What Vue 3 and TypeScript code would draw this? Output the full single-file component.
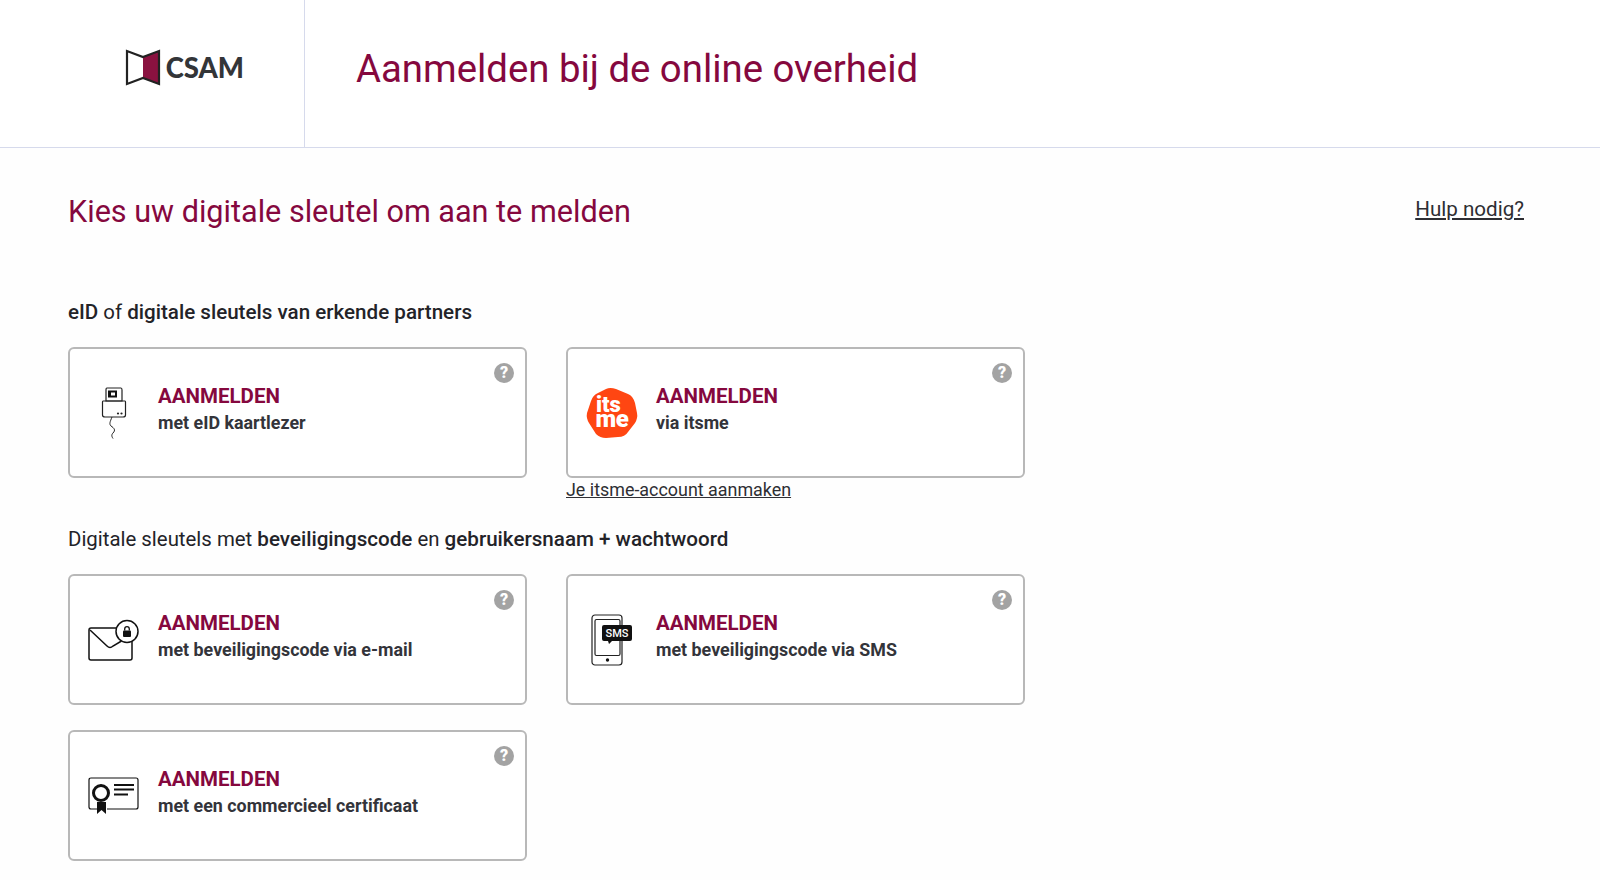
<script setup lang="ts">
interface Option {
  key: string
  sub: string
}
const first: Option[] = [
  { key: 'eid', sub: 'met eID kaartlezer' },
  { key: 'itsme', sub: 'via itsme' },
]
const second: Option[] = [
  { key: 'mail', sub: 'met beveiligingscode via e-mail' },
  { key: 'sms', sub: 'met beveiligingscode via SMS' },
  { key: 'cert', sub: 'met een commercieel certificaat' },
]
</script>

<template>
  <div class="page">
    <header class="top">
      <div class="logo-cell">
        <div class="logo">
          <svg class="door" width="36" height="37" viewBox="0 0 36 37">
            <path d="M18 8 L34 2 L34 35 L18 29 Z" fill="#8a1240" />
            <path d="M18 8 L34 2 L34 35 L18 29 L2 35 L2 2 Z" fill="none" stroke="#222" stroke-width="2.2" />
          </svg>
          <span class="logo-text">CSAM</span>
        </div>
      </div>
      <h1 class="title">Aanmelden bij de online overheid</h1>
    </header>

    <main class="content">
      <div class="head-row">
        <h2 class="heading">Kies uw digitale sleutel om aan te melden</h2>
        <a class="help">Hulp nodig?</a>
      </div>

      <p class="label first-label"><b>eID</b> of <b>digitale sleutels van erkende partners</b></p>
      <div class="grid">
        <div v-for="o in first" :key="o.key" class="card">
          <div class="icon">
            <svg v-if="o.key === 'eid'" width="26" height="52" viewBox="0 0 26 52" fill="none" stroke="#222">
              <path d="M6 1 H20 Q21 1 21 3 V14 H5 V3 Q5 1 6 1 Z" stroke-width="1.2" />
              <rect x="7" y="3.500" width="9" height="7" fill="#111" stroke="none" />
              <rect x="10" y="5.500" width="4" height="3" fill="#fff" stroke="none" />
              <path d="M2 14 H24 Q24.5 14 24.5 15 V28 Q24.5 30 22 30 H4 Q1.5 30 1.5 28 V15 Q1.5 14 2 14 Z" stroke-width="1.2" />
              <circle cx="17" cy="26.500" r="1.100" fill="#222" stroke="none" />
              <circle cx="20.500" cy="26.500" r="1.100" fill="#222" stroke="none" />
              <path d="M11 30 C9 35 8 37 10 39 C13 41 15 43 12 46 C10 48 11 50 12 51.500" stroke-width="1" />
            </svg>
            <svg v-else width="52" height="52" viewBox="0 0 52 52">
              <path d="M20 2 Q24 0 30 2 L42 7 Q47 9 49 16 L51 26 Q52 31 49 36 L42 45 Q39 50 32 50 L20 51 Q14 51 10 47 L3 36 Q0 31 1 26 L5 14 Q7 8 12 6 Z" fill="#ff4612" />
              <text x="10" y="25" class="its">its</text>
              <text x="9.500" y="40" class="me">me</text>
            </svg>
          </div>
          <div class="text">
            <div class="action">AANMELDEN</div>
            <div class="sub">{{ o.sub }}</div>
          </div>
          <span class="q">?</span>
          <a v-if="o.key === 'itsme'" class="create">Je itsme-account aanmaken</a>
        </div>
      </div>

      <p class="label second-label">Digitale sleutels met <b>beveiligingscode</b> en <b>gebruikersnaam + wachtwoord</b></p>
      <div class="grid">
        <div v-for="o in second" :key="o.key" class="card">
          <div class="icon">
            <svg v-if="o.key === 'mail'" width="52" height="44" viewBox="0 0 52 44" fill="none" stroke="#111" stroke-width="1.500">
              <path d="M29 10 H3 Q1 10 1 12 V40 Q1 42 3 42 H42 Q44 42 44 40 V22" />
              <path d="M2 12 L19 28 Q22 31 25 28 L33.500 23" />
              <circle cx="39" cy="13.500" r="11" fill="#fff" />
              <rect x="35" y="12.500" width="8" height="6.500" rx="1" fill="#111" stroke="none" />
              <path d="M36.700 12.500 V11 A2.300 2.300 0 0 1 41.300 11 V12.500" stroke-width="1.300" />
            </svg>
            <svg v-else-if="o.key === 'sms'" width="42" height="52" viewBox="0 0 42 52" fill="none" stroke="#222" stroke-width="1.200">
              <rect x="1" y="1" width="30" height="50" rx="3" />
              <rect x="4" y="5.500" width="25" height="36" rx="1.500" />
              <circle cx="16.500" cy="46" r="1.700" fill="#111" stroke="none" />
              <path d="M13 11 H39 Q41 11 41 13 V25 Q41 27 39 27 H21 L18 30 L17 27 H13 Q11 27 11 25 V13 Q11 11 13 11 Z" fill="#111" stroke="none" />
              <text x="26" y="23" text-anchor="middle" class="sms">SMS</text>
            </svg>
            <svg v-else width="52" height="38" viewBox="0 0 52 38" fill="none" stroke="#111">
              <path d="M9 32 H3 Q1 32 1 30 V3 Q1 1 3 1 H48 Q50 1 50 3 V30 Q50 32 48 32 H19" stroke-width="1.200" />
              <circle cx="13" cy="16" r="7.500" stroke-width="3" />
              <path d="M9 25 H18 V37 L13.500 33 L9 37 Z" fill="#111" stroke="none" />
              <path d="M26 8 H46 M26 12.500 H46 M26 17.500 H40" stroke-width="1.800" />
            </svg>
          </div>
          <div class="text">
            <div class="action">AANMELDEN</div>
            <div class="sub">{{ o.sub }}</div>
          </div>
          <span class="q">?</span>
        </div>
      </div>
    </main>
  </div>
</template>

<style scoped>
.page {
  width: 1600px;
  height: 880px;
  overflow: hidden;
  background: #fefefe;
  color: #232328;
  font-family: Roboto, "Liberation Sans", sans-serif;
}
.top {
  display: flex;
  height: 147px;
  border-bottom: 1px solid #d6daec;
  background: #fff;
}
.logo-cell {
  width: 304px;
  flex: none;
  border-right: 1px solid #d6daec;
  display: flex;
  justify-content: flex-end;
}
.logo {
  display: flex;
  align-items: center;
  height: 134px;
  margin-right: 60px;
  gap: 5px;
}
.door {
  display: block;
}
.logo-text {
  font-family: Lato, "Open Sans", sans-serif;
  font-weight: 900;
  font-size: 27.500px;
  color: #333538;
}
.title {
  margin: 0 0 0 51px;
  font-size: 38.350px;
  font-weight: 400;
  line-height: 137px;
  color: #85083e;
}
.content {
  padding: 0 76px 0 68px;
}
.head-row {
  display: flex;
  justify-content: space-between;
  padding-top: 44px;
}
.heading {
  margin: 0;
  font-size: 30.600px;
  font-weight: 400;
  line-height: 40px;
  color: #85083e;
}
.help {
  font-size: 20.600px;
  line-height: 28px;
  text-decoration: underline;
  color: #2e2e33;
  margin-top: 3px;
}
.label {
  margin: 0;
  font-size: 20.400px;
  line-height: 28px;
  color: #232328;
}
.label b {
  font-size: 20.600px;
  font-weight: 500;
}
.first-label {
  margin-top: 66px;
  margin-bottom: 21px;
}
.second-label {
  margin-top: 47px;
  margin-bottom: 21px;
}
.grid {
  display: grid;
  grid-template-columns: 459px 459px;
  column-gap: 39px;
  row-gap: 25px;
}
.card {
  position: relative;
  box-sizing: border-box;
  height: 131px;
  background: #fff;
  border: 2px solid #b8b8b8;
  border-radius: 6px;
  display: flex;
  align-items: center;
}
.icon {
  width: 88px;
  flex: none;
  display: flex;
  justify-content: center;
}
.icon svg {
  display: block;
}
.text {
  padding-bottom: 7px;
}
.action {
  font-size: 20.500px;
  font-weight: 700;
  line-height: 27px;
  color: #85083e;
}
.sub {
  font-size: 17.850px;
  font-weight: 700;
  line-height: 26px;
  color: #33343a;
}
.q {
  position: absolute;
  top: 14px;
  right: 11px;
  width: 20px;
  height: 20px;
  border-radius: 50%;
  background: #a3a3a3;
  color: #fff;
  font-size: 16px;
  font-weight: 900;
  line-height: 20px;
  text-align: center;
}
.create {
  position: absolute;
  left: -2px;
  top: 128px;
  font-size: 17.900px;
  line-height: 26px;
  text-decoration: underline;
  color: #2e2e33;
  white-space: nowrap;
}
.its {
  font-family: Roboto, sans-serif;
  font-size: 22px;
  font-weight: 900;
  fill: #fff;
}
.me {
  font-family: Roboto, sans-serif;
  font-size: 24px;
  font-weight: 900;
  fill: #fff;
  letter-spacing: -0.500px;
}
.sms {
  font-family: Roboto, sans-serif;
  font-size: 11px;
  font-weight: 500;
  fill: #fff;
  stroke: none;
}
</style>
